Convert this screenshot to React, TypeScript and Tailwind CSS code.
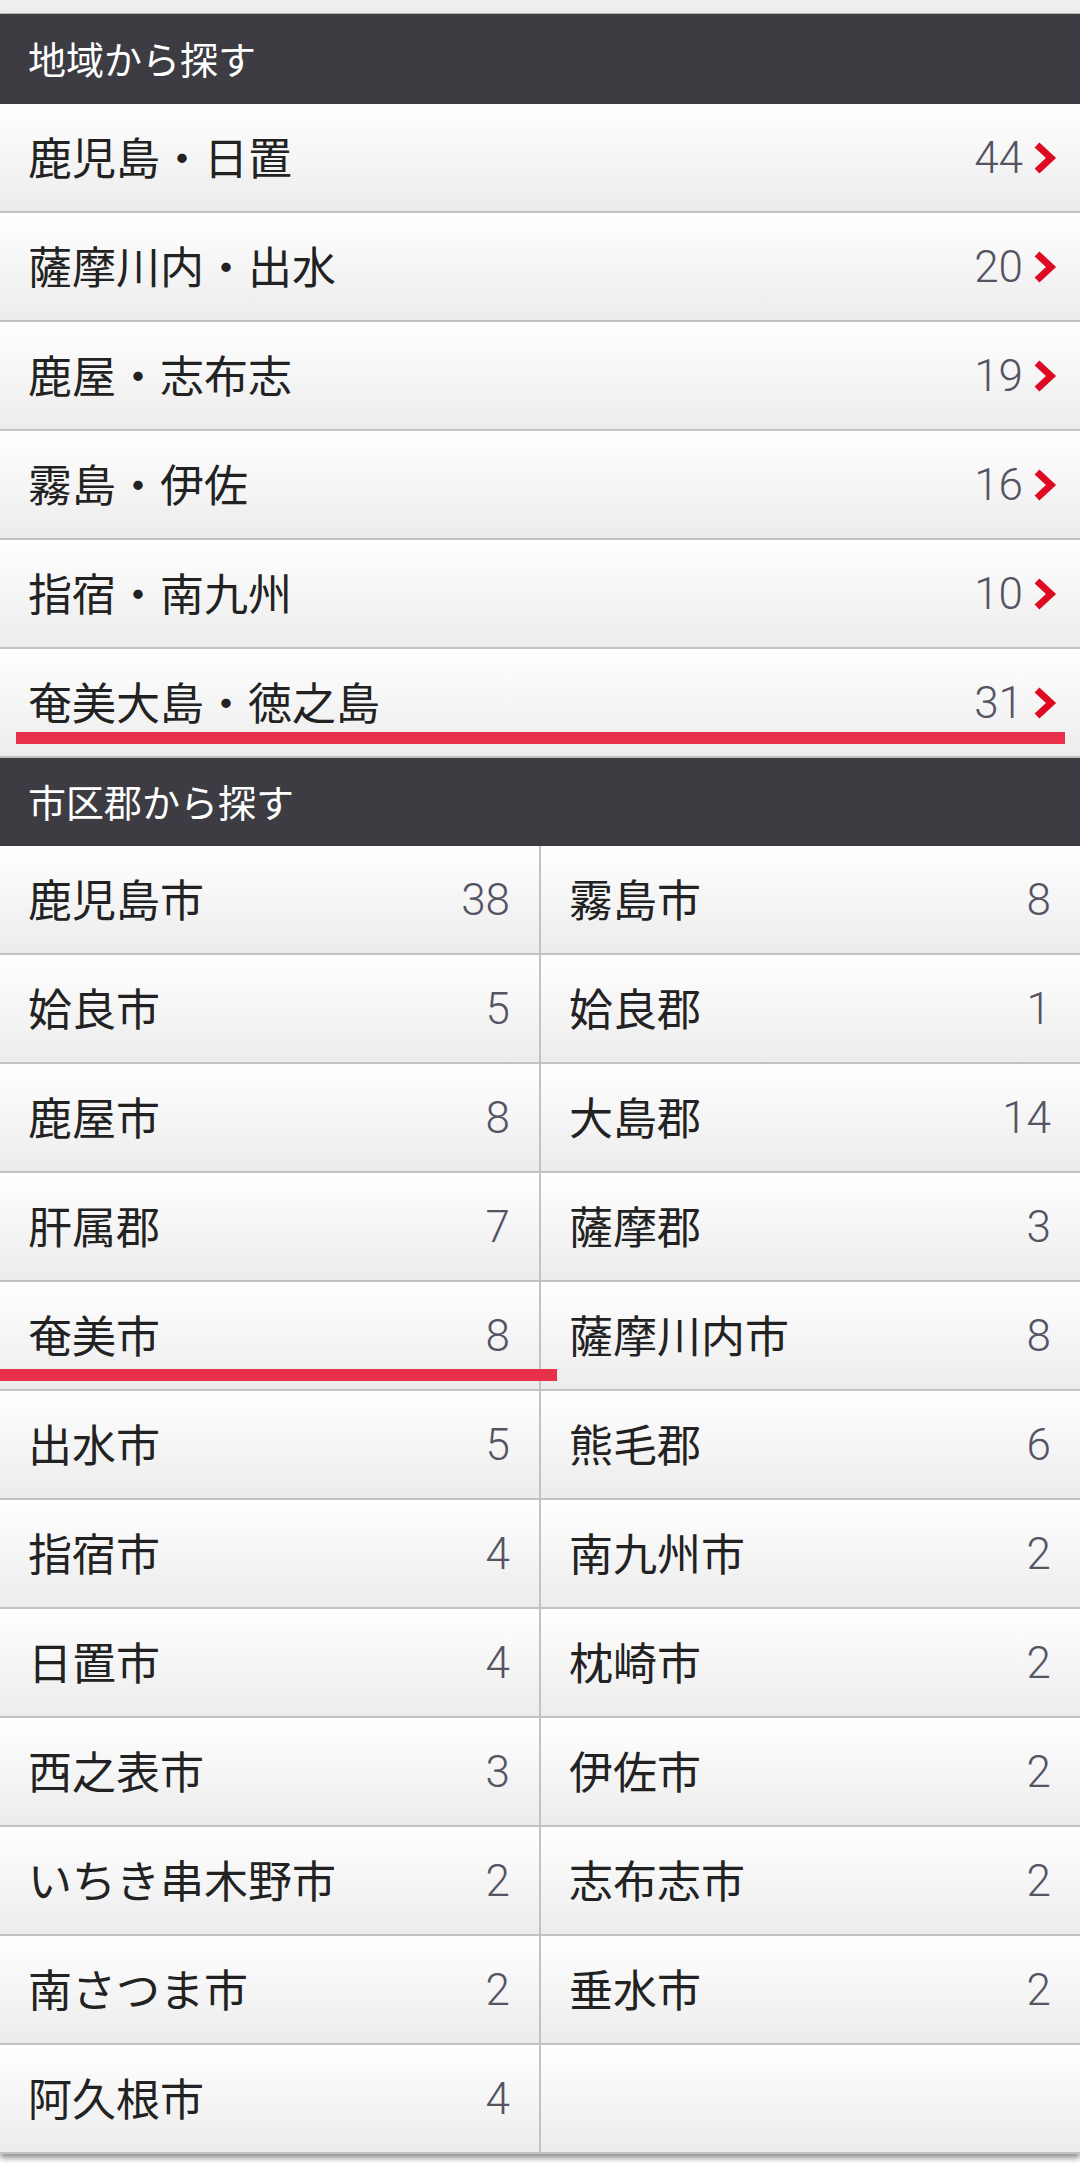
const regions = [
  { name: "鹿児島・日置", count: 44 },
  { name: "薩摩川内・出水", count: 20 },
  { name: "鹿屋・志布志", count: 19 },
  { name: "霧島・伊佐", count: 16 },
  { name: "指宿・南九州", count: 10 },
  { name: "奄美大島・徳之島", count: 31, marked: true },
];

const cities: { name: string; count: number | null; marked?: boolean }[] = [
  { name: "鹿児島市", count: 38 },
  { name: "霧島市", count: 8 },
  { name: "姶良市", count: 5 },
  { name: "姶良郡", count: 1 },
  { name: "鹿屋市", count: 8 },
  { name: "大島郡", count: 14 },
  { name: "肝属郡", count: 7 },
  { name: "薩摩郡", count: 3 },
  { name: "奄美市", count: 8, marked: true },
  { name: "薩摩川内市", count: 8 },
  { name: "出水市", count: 5 },
  { name: "熊毛郡", count: 6 },
  { name: "指宿市", count: 4 },
  { name: "南九州市", count: 2 },
  { name: "日置市", count: 4 },
  { name: "枕崎市", count: 2 },
  { name: "西之表市", count: 3 },
  { name: "伊佐市", count: 2 },
  { name: "いちき串木野市", count: 2 },
  { name: "志布志市", count: 2 },
  { name: "南さつま市", count: 2 },
  { name: "垂水市", count: 2 },
  { name: "阿久根市", count: 4 },
  { name: "", count: null },
];

const jp = "font-['Noto_Sans_CJK_JP','Noto_Sans',sans-serif]";
const num = "font-['Roboto','Noto_Sans',sans-serif] font-light text-[44px] text-[#545463]";

function SectionHeader({ title, h }: { title: string; h: string }) {
  return (
    <div className={`${h} flex items-center bg-[#3d3c43] px-[28px]`}>
      <span className={`${jp} pb-[3px] text-[38px] leading-none text-white`}>{title}</span>
    </div>
  );
}

function Chevron() {
  return (
    <svg width="24" height="32" viewBox="0 0 24 32" className="blur-[0.5px]">
      <polyline
        points="4,3 18,16 4,29"
        fill="none"
        stroke="#de0a22"
        strokeWidth="7"
        strokeLinejoin="miter"
      />
    </svg>
  );
}

export default function App() {
  return (
    <div className="min-h-[2170px] w-[1080px] bg-white">
      <div className="h-[14px] bg-[#eeeeee] border-b border-[#bdbdbd]" />
      <div className="shadow-[0_4px_6px_rgba(0,0,0,0.45)]">
        <SectionHeader title="地域から探す" h="h-[90px]" />
        {regions.map((r) => (
          <div
            key={r.name}
            className="relative flex h-[109px] items-center border-b-2 border-[#c2c2c2] bg-gradient-to-b from-white to-[#ececec] pl-[28px] pr-[23px]"
          >
            <span className={`${jp} flex-1 pb-[3px] text-[44px] leading-none text-[#222]`}>{r.name}</span>
            <span className={`${num} leading-none`}>{r.count}</span>
            <span className="ml-[10px] flex items-center">
              <Chevron />
            </span>
            {r.marked && (
              <div className="absolute left-[16px] top-[83px] h-[12px] w-[1049px] bg-[#e8304a]" />
            )}
          </div>
        ))}
        <SectionHeader title="市区郡から探す" h="h-[88px]" />
        <div className="grid grid-cols-[541px_1fr]">
          {cities.map((c, i) => (
            <div
              key={i}
              className={`relative flex h-[109px] items-center border-b-2 border-[#c2c2c2] bg-gradient-to-b from-white to-[#ececec] pl-[28px] pr-[29px] ${
                i % 2 === 0 ? "border-r-2" : ""
              }`}
            >
              <span className={`${jp} flex-1 pb-[3px] text-[44px] leading-none text-[#222]`}>{c.name}</span>
              {c.count !== null && <span className={`${num} leading-none`}>{c.count}</span>}
              {c.marked && (
                <div className="absolute left-0 top-[87px] z-10 h-[12px] w-[557px] bg-[#e8304a]" />
              )}
            </div>
          ))}
        </div>
      </div>
    </div>
  );
}
